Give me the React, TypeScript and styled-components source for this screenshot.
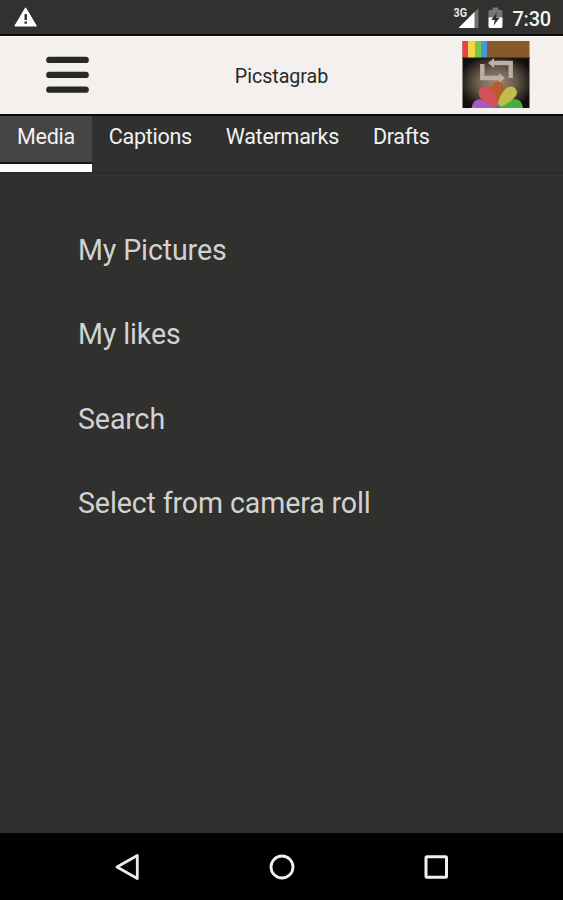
import React from "react";
import styled, { createGlobalStyle } from "styled-components";

const Global = createGlobalStyle`
  * { box-sizing: border-box; }
  body { margin: 0; background: #30302e; font-family: Roboto, "Noto Sans", sans-serif; }
  svg { display: block; flex: none; }
`;

const Screen = styled.div`
  width: 563px;
  height: 900px;
  display: flex;
  flex-direction: column;
  overflow: hidden;
  background: #30302e;
`;

const StatusBar = styled.div`
  height: 36px;
  flex: none;
  display: flex;
  align-items: center;
  padding: 0 12px 0 14px;
  background: #31312f;
  border-bottom: 2px solid #090909;
`;

const StatusIcons = styled.div`
  margin-left: auto;
  display: flex;
  align-items: center;
  gap: 9px;
`;

const Clock = styled.span`
  color: #f4f4f4;
  font-size: 20px;
  line-height: 24px;
  font-weight: 500;
  letter-spacing: -0.2px;
  padding-top: 4px;
`;

const Header = styled.header`
  height: 78px;
  flex: none;
  display: grid;
  grid-template-columns: 89px 1fr 101px;
  align-items: center;
  padding-bottom: 2px;
  background: #f3f0ed;
  border-top: 1px solid #fffefb;
`;

const MenuButton = styled.button`
  border: 0;
  margin: 0;
  padding: 0 0 0 46px;
  background: none;
`;

const Title = styled.h1`
  margin: 0;
  padding: 5px 0 0 12px;
  text-align: center;
  color: #282828;
  font-size: 19.7px;
  font-weight: 400;
  line-height: 26px;
  letter-spacing: -0.05px;
`;

const TabBar = styled.nav`
  height: 58px;
  flex: none;
  display: flex;
  background: #30302e;
  border-top: 2px solid #090909;
  box-shadow: 0 1px 0 #2a2a28, 0 2px 0 #2d2d2b;
`;

const Tab = styled.button<{ $active?: boolean }>`
  border: 0;
  margin: 0;
  padding: 8px 16.8px 0 17px;
  display: flex;
  align-items: flex-start;
  color: #f2f2f2;
  font: 400 21.5px/26px Roboto, sans-serif;
  letter-spacing: -0.26px;
  white-space: nowrap;
  background: ${(p) => (p.$active ? "#464543" : "transparent")};
  box-shadow: ${(p) => (p.$active ? "inset 0 -8px 0 #fff, inset 0 -10px 0 #171716" : "none")};
`;

const Menu = styled.ul`
  list-style: none;
  flex: 1;
  margin: 0;
  padding: 36px 0 0 78px;
`;

const MenuItem = styled.li`
  height: 84.3px;
  display: flex;
  align-items: center;
  color: #d2d2d1;
  font-size: 28.6px;
  line-height: 36px;
  letter-spacing: -0.13px;
  white-space: nowrap;
`;

const NavBar = styled.footer`
  height: 67px;
  flex: none;
  display: flex;
  justify-content: space-between;
  align-items: center;
  padding: 0 113px;
  background: #000;
`;

const WarningIcon = () => (
  <svg width="24" height="20" viewBox="0 0 24 20">
    <path d="M11.6 0.8 22.4 19H0.8Z" fill="#fff" stroke="#fff" strokeWidth="1" strokeLinejoin="round" />
    <path d="M10.5 7h2.5v6h-2.5zM10.5 14.6h2.5v2.2h-2.5z" fill="#333" />
  </svg>
);

const SignalIcon = () => (
  <svg width="26" height="22" viewBox="0 0 26 22">
    <path d="M25.500 2v20H5.500Z" fill="#71716f" />
    <path d="M21.500 6V22H5.500Z" fill="#fff" />
    <text x="0.5" y="11" fontFamily="Roboto" fontWeight="700" fontSize="12.500" textLength="13.500" lengthAdjust="spacingAndGlyphs" fill="#e5e5e5">3G</text>
  </svg>
);

const BatteryIcon = () => (
  <svg width="15" height="22" viewBox="0 -1.500 15 22">
    <path d="M4.5 0h6v2.5H13q1.500 0 1.500 1.500V11H.5V4Q.5 2.500 2 2.500h2.500Z" fill="#757573" />
    <path d="M.5 10h14v9q0 1.500-1.500 1.500H2Q.5 20.500.5 19Z" fill="#fff" />
    <path d="M8.800 4.800 3.400 12.500h3.400L5.700 18l5.900-7.700H8.100Z" fill="#30302e" />
  </svg>
);

const BurgerIcon = () => (
  <svg width="43" height="38" viewBox="0 0 43 38">
    <path d="M3.300 3.900h36.400M3.300 18.900h36.400M3.300 33.700h36.400" stroke="#282826" strokeWidth="6.300" strokeLinecap="round" />
  </svg>
);

const AppLogo = () => (
  <svg width="68" height="67" viewBox="0 0 68 67">
    <defs>
      <radialGradient id="glow" cx="0.5" cy="0.5" r="0.56">
        <stop offset="0" stopColor="#a58c70" />
        <stop offset="0.5" stopColor="#6b5d4e" />
        <stop offset="1" stopColor="#110f0e" />
      </radialGradient>
      <clipPath id="frame"><path d="M0.500 0h67v67h-67z" /></clipPath>
    </defs>
    <g clipPath="url(#frame)">
      <path d="M0 16h68v51H0z" fill="url(#glow)" />
      <path d="M0 0h68v17H0z" fill="#88592a" />
      <path d="M0 0h6v17H0z" fill="#e04449" />
      <path d="M6 0h7v17H6z" fill="#f4d447" />
      <path d="M13 0h6v17h-6z" fill="#73ca42" />
      <path d="M19 0h6v17h-6z" fill="#4397dc" />
      <path d="M0 17h68" stroke="#211914" strokeWidth="1.200" />
      <path d="M20.300 23V37H38M48.700 37V22H30" fill="none" stroke="#b8b0a7" strokeWidth="4.400" />
      <path d="M37 32 43 37l-6 5ZM32 17l-6 5 6 5Z" fill="#b8b0a7" />
      <path d="M35.500 66C31 59 29.500 51 29.500 46.500a6 6 0 0 1 12 0C41.500 51 40 59 35.500 66Z" fill="#b85b2d" />
      <path d="M35.500 67H9.500C11 60 15 57.500 20 58.500Z" fill="#a55bc6" />
      <path d="M35.500 67H61C60 60 56 57.500 51 58Z" fill="#4bae3c" />
      <path d="M35.500 66.500C28 65 21 61.500 17.500 55.500 14 49 21 42.500 27.500 46.500 33 50.500 35.500 59 35.500 66.500Z" fill="#d25057" />
      <path d="M35.500 66.500C36 58 39.500 51.500 44.500 47 50.500 42.500 57.500 49 54 54.500 49 61 42.500 65 35.500 66.500Z" fill="#c0be48" />
      <path d="m35.500 61.500 4 5.500h-4Z" fill="#378caa" />
    </g>
  </svg>
);

const BackIcon = () => (
  <svg width="27" height="28" viewBox="0 0 27 28">
    <path d="M24.300 2.500v23L4 14Z" fill="none" stroke="#e9e9e9" strokeWidth="2.800" strokeLinejoin="round" />
  </svg>
);

const HomeIcon = () => (
  <svg width="28" height="28" viewBox="0 0 28 28">
    <circle cx="14" cy="14" r="11" fill="none" stroke="#f1f1f1" strokeWidth="2.800" />
  </svg>
);

const RecentIcon = () => (
  <svg width="27" height="28" viewBox="0 0 27 28">
    <rect x="3" y="3.800" width="20.500" height="20.500" rx="1" fill="none" stroke="#f1f1f1" strokeWidth="3" />
  </svg>
);

const tabs = ["Media", "Captions", "Watermarks", "Drafts"];
const options = ["My Pictures", "My likes", "Search", "Select from camera roll"];

export default function App() {
  return (
    <Screen>
      <Global />
      <StatusBar>
        <WarningIcon />
        <StatusIcons>
          <SignalIcon />
          <BatteryIcon />
          <Clock>7:30</Clock>
        </StatusIcons>
      </StatusBar>
      <Header>
        <MenuButton aria-label="Menu"><BurgerIcon /></MenuButton>
        <Title>Picstagrab</Title>
        <AppLogo />
      </Header>
      <TabBar>
        {tabs.map((label, i) => <Tab key={label} $active={i === 0}>{label}</Tab>)}
      </TabBar>
      <Menu>
        {options.map((label) => <MenuItem key={label}>{label}</MenuItem>)}
      </Menu>
      <NavBar>
        <BackIcon />
        <HomeIcon />
        <RecentIcon />
      </NavBar>
    </Screen>
  );
}
